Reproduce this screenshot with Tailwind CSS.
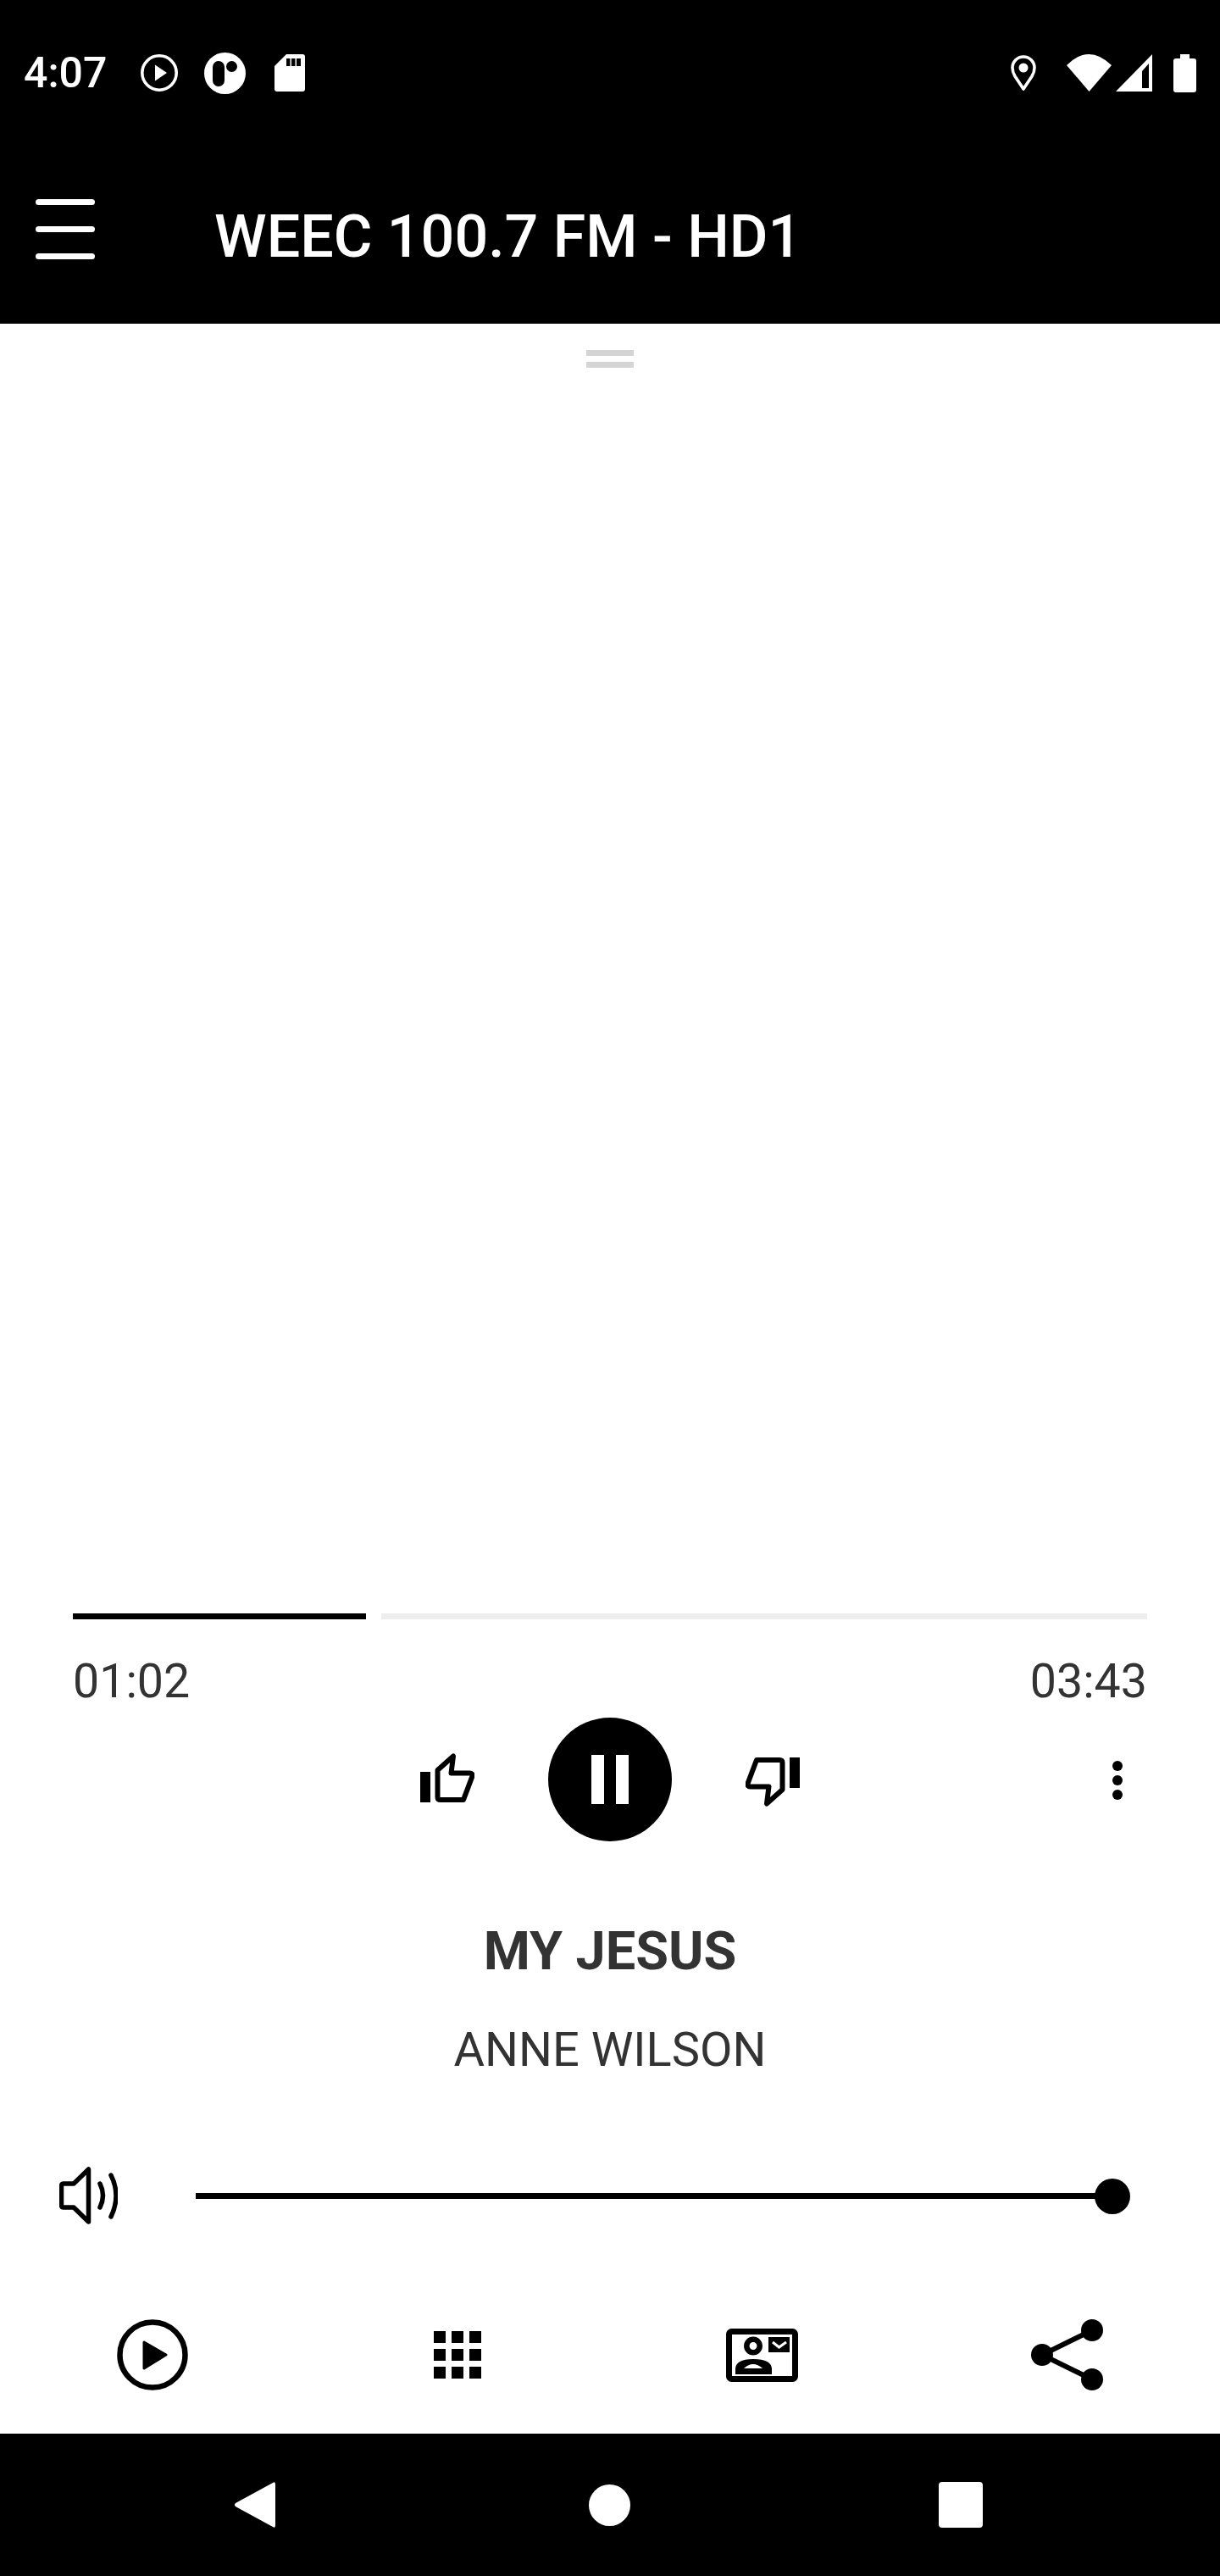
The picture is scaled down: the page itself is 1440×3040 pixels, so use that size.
<!DOCTYPE html>
<html lang="en">
<head>
  <meta charset="UTF-8" />
  <meta name="viewport" content="width=device-width, initial-scale=1.0"/>
  <title>WEEC 100.7 FM - HD1</title>
  <script src="https://cdn.jsdelivr.net/npm/@tailwindcss/browser@4"></script>
</head>
<body class="bg-white font-['Roboto',sans-serif]">
  <div class="w-[1440px] h-[3040px] flex flex-col">

    <!-- Status bar -->
    <div class="h-[172px] bg-black text-white flex items-center relative">
      <span class="ml-[28px] w-[138px] text-[50px] font-medium leading-none">4:07</span>
      <svg class="w-[44px] h-[44px]" viewBox="0 0 44 44">
        <circle cx="22" cy="22" r="20.2" fill="none" stroke="#fff" stroke-width="3.6"/>
        <path d="M17 12.5 L31 22 L17 31.5 Z" fill="#fff"/>
      </svg>
      <svg class="ml-[31px] w-[49px] h-[49px]" viewBox="0 0 49 49">
        <circle cx="24.5" cy="24.5" r="24.5" fill="#fff"/>
        <rect x="10" y="10" width="14" height="30" rx="7" fill="#000"/>
        <circle cx="32.5" cy="16.500" r="6.5" fill="#000"/>
      </svg>
      <svg class="ml-[34px] w-[36px] h-[44px]" viewBox="0 0 36 44">
        <path d="M14 0 H33 Q36 0 36 3 V41 Q36 44 33 44 H3 Q0 44 0 41 V14 Z" fill="#fff"/>
        <path d="M14 5 h4.500 v9 h-4.500 Z M20 5 h4.500 v9 h-4.500 Z M26 5 h5 v9 h-5 Z" fill="#000"/>
      </svg>
      <div class="ml-auto flex items-center">
        <svg class="w-[30px] h-[44px]" viewBox="0 0 30 44">
          <path d="M15 41 L5 26 Q2 21 2 16 A13 13 0 0 1 28 16 Q28 21 25 26 Z" fill="none" stroke="#fff" stroke-width="3.6" stroke-linejoin="round"/>
          <circle cx="15" cy="16" r="5.500" fill="#fff"/>
        </svg>
        <svg class="ml-[36px] w-[53px] h-[44px]" viewBox="0 0 53 44">
          <path d="M0 13 Q26 -13 53 13 L26.500 44 Z" fill="#fff"/>
        </svg>
        <svg class="ml-[5px] w-[44px] h-[44px]" viewBox="0 0 44 44">
          <path fill-rule="evenodd" d="M43 0 V44 H0 Z M39 11 L31 20 V40 H39 Z" fill="#fff"/>
        </svg>
        <svg class="ml-[24px] mr-[28px] w-[27px] h-[45px]" viewBox="0 0 27 45">
          <path d="M8 0 H19 V5 H24 Q27 5 27 8 V42 Q27 45 24 45 H3 Q0 45 0 42 V8 Q0 5 3 5 H8 Z" fill="#fff"/>
        </svg>
      </div>
    </div>

    <!-- Toolbar -->
    <div class="h-[210px] bg-black text-white flex items-start">
      <div class="ml-[42px] mt-[63px] w-[70px] flex flex-col gap-[25px]">
        <div class="h-[7px] bg-white rounded-full"></div>
        <div class="h-[7px] bg-white rounded-full"></div>
        <div class="h-[7px] bg-white rounded-full"></div>
      </div>
      <h1 class="ml-[141px] mt-[67px] text-[70px] font-medium leading-[80px] whitespace-nowrap">WEEC 100.7 FM - HD1</h1>
    </div>

    <!-- Player -->
    <div class="flex-1 bg-white flex flex-col">
      <div class="pt-[31px] flex flex-col items-center gap-[7px]">
        <div class="w-[56px] h-[7px] bg-[#d4d4d4]"></div>
        <div class="w-[56px] h-[7px] bg-[#d4d4d4]"></div>
      </div>

      <!-- Track progress -->
      <div class="mt-[1470px] ml-[86px] w-[1268px] flex gap-[18px]">
        <div class="w-[346px] h-[7px] bg-black"></div>
        <div class="flex-1 h-[7px] bg-[#eeeeee]"></div>
      </div>
      <div class="mt-[41px] mx-[86px] flex justify-between text-[55.5px] leading-[66px] text-[#333333]">
        <span>01:02</span>
        <span>03:43</span>
      </div>

      <!-- Controls -->
      <div class="mt-[9px] pl-[496px] flex items-start">
        <svg class="mt-[42px] w-[64px] h-[58px]" viewBox="0 0 64 58">
          <path d="M0 22 H12 V58 H0 Z" fill="#000"/>
          <path d="M20.500 20 L39 3.500 L36.500 23.500 H58.500 Q62 23.500 61.500 27 L51 55 H24 Q20.500 55 20.500 52 Z" fill="none" stroke="#000" stroke-width="6" stroke-linejoin="round"/>
        </svg>
        <div class="ml-[87px] w-[146px] h-[146px] rounded-full bg-black flex items-center justify-center gap-[14px]">
          <div class="w-[15px] h-[58px] bg-white"></div>
          <div class="w-[15px] h-[58px] bg-white"></div>
        </div>
        <svg class="ml-[87px] mt-[47px] w-[64px] h-[58px] rotate-180" viewBox="0 0 64 58">
          <path d="M0 22 H12 V58 H0 Z" fill="#000"/>
          <path d="M20.500 20 L39 3.500 L36.500 23.500 H58.500 Q62 23.500 61.500 27 L51 55 H24 Q20.500 55 20.500 52 Z" fill="none" stroke="#000" stroke-width="6" stroke-linejoin="round"/>
        </svg>
        <div class="ml-[369px] mt-[51px] flex flex-col gap-[5px]">
          <div class="w-[12px] h-[12px] rounded-full bg-black"></div>
          <div class="w-[12px] h-[12px] rounded-full bg-black"></div>
          <div class="w-[12px] h-[12px] rounded-full bg-black"></div>
        </div>
      </div>

      <!-- Track info -->
      <div class="mt-[90px] text-center text-[#333333]">
        <div class="text-[63px] font-bold leading-[80px]">MY JESUS</div>
        <div class="mt-[44px] text-[56px] leading-[64px]">ANNE WILSON</div>
      </div>

      <!-- Volume -->
      <div class="mt-[106px] pl-[70px] flex items-center">
        <svg class="w-[69px] h-[68px]" viewBox="0 0 69 68">
          <path d="M34.500 3 V65 L17 48 H5 Q2.500 48 2.500 45 V23 Q2.500 20 5 20 H17 Z" fill="none" stroke="#000" stroke-width="5.500" stroke-linejoin="round"/>
          <path d="M48 20 Q55 34 48 48" fill="none" stroke="#000" stroke-width="5.500" stroke-linecap="round"/>
          <path d="M61 10 Q73 34 61 59" fill="none" stroke="#000" stroke-width="5.500" stroke-linecap="round"/>
        </svg>
        <div class="ml-[92px] w-[1082px] h-[7px] bg-black relative">
          <div class="absolute right-[-21px] top-[-17px] w-[42px] h-[42px] rounded-full bg-black"></div>
        </div>
      </div>

      <!-- Bottom actions -->
      <div class="mt-[111px] grid grid-cols-4 justify-items-center items-center h-[86px]">
        <svg class="w-[84px] h-[84px]" viewBox="0 0 84 84">
          <circle cx="42" cy="42" r="38.500" fill="none" stroke="#000" stroke-width="6.500"/>
          <path d="M32 27 L58 42 L32 58 Z" fill="#000" stroke="#000" stroke-width="3" stroke-linejoin="round"/>
        </svg>
        <div class="grid grid-cols-3 gap-[7px] -ml-[1px]">
          <div class="w-[14px] h-[14px] bg-black"></div>
          <div class="w-[14px] h-[14px] bg-black"></div>
          <div class="w-[14px] h-[14px] bg-black"></div>
          <div class="w-[14px] h-[14px] bg-black"></div>
          <div class="w-[14px] h-[14px] bg-black"></div>
          <div class="w-[14px] h-[14px] bg-black"></div>
          <div class="w-[14px] h-[14px] bg-black"></div>
          <div class="w-[14px] h-[14px] bg-black"></div>
          <div class="w-[14px] h-[14px] bg-black"></div>
        </div>
        <svg class="w-[85px] h-[63px] -ml-[1px]" viewBox="0 0 85 63">
          <rect x="3.500" y="3.500" width="78" height="56" rx="3" fill="none" stroke="#000" stroke-width="7"/>
          <circle cx="32" cy="20.500" r="7.700" fill="none" stroke="#000" stroke-width="6.500"/>
          <path d="M11 54 V48 Q11 36 32 36 Q54 36 54 48 V54 Z" fill="#000"/>
          <path d="M21 47 Q32 37 43 47 Z" fill="#fff"/>
          <rect x="50" y="10" width="25" height="18" fill="#000"/>
          <path d="M55 16 L62.500 22 L71 16" fill="none" stroke="#fff" stroke-width="3"/>
        </svg>
        <svg class="w-[85px] h-[85px] -ml-[1px]" viewBox="0 0 85 85">
          <path d="M72 13 L13 42 L72 71" fill="none" stroke="#000" stroke-width="6"/>
          <circle cx="72" cy="13" r="13" fill="#000"/>
          <circle cx="13" cy="42" r="13" fill="#000"/>
          <circle cx="72" cy="71" r="13" fill="#000"/>
        </svg>
      </div>
    </div>

    <!-- Navigation bar -->
    <div class="h-[168px] bg-black relative flex items-center justify-center">
      <div class="w-[1440px] flex items-center pl-[277px]">
        <svg class="w-[48px] h-[56px]" viewBox="0 0 48 56">
          <path d="M45 2 Q48 0 48 4 V52 Q48 56 45 54 L1 30 Q-1 28 1 26 Z" fill="#fff"/>
        </svg>
        <div class="ml-[370px] w-[49px] h-[49px] rounded-full bg-white"></div>
        <div class="ml-[364px] w-[52px] h-[54px] rounded-[4px] bg-white"></div>
      </div>
    </div>
  </div>
</body>
</html>
